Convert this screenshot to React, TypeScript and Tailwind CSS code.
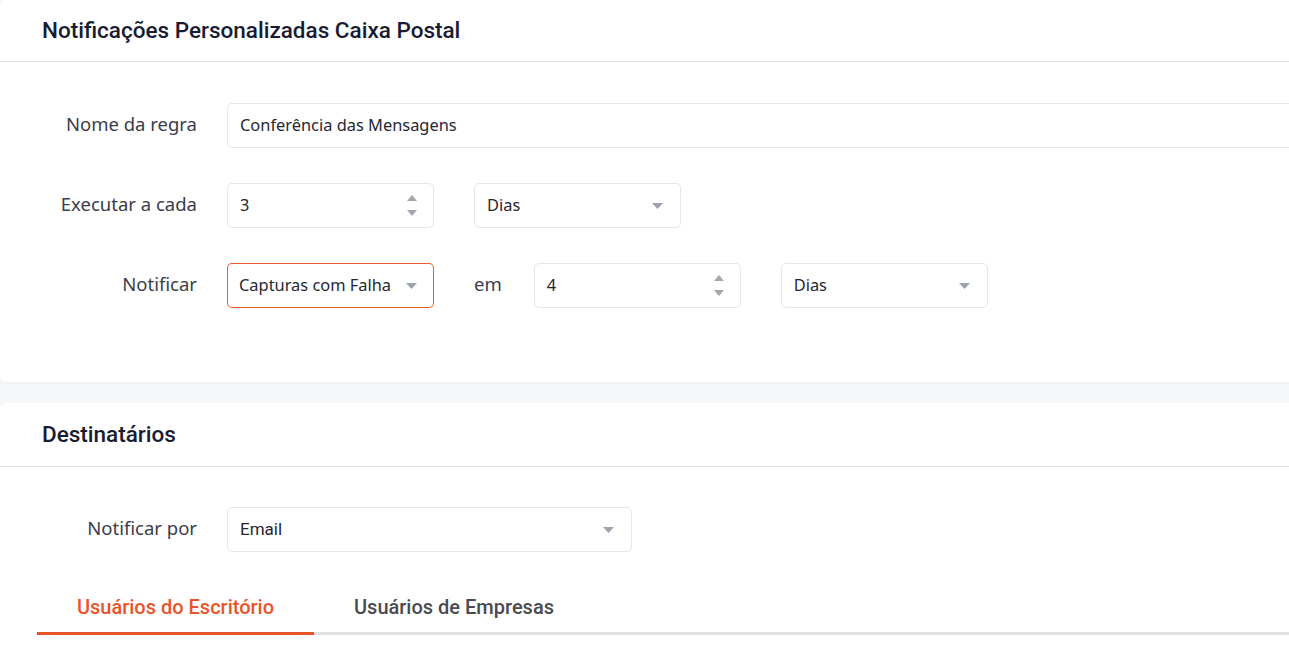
import React from "react";

const Caret = () => (
  <svg width="11" height="6" viewBox="0 0 11 6" className="shrink-0">
    <path d="M0 0 L11 0 L5.5 6 Z" fill="#9ca3af" />
  </svg>
);

const Spinner = () => (
  <div className="flex flex-col items-center gap-[9px] shrink-0">
    <svg width="10" height="6" viewBox="0 0 10 6">
      <path d="M0 6 L10 6 L5 0 Z" fill="#a3a8b0" />
    </svg>
    <svg width="10" height="6" viewBox="0 0 10 6">
      <path d="M0 0 L10 0 L5 6 Z" fill="#a3a8b0" />
    </svg>
  </div>
);

const inputFont = { fontFamily: '"Noto Sans", "Open Sans", sans-serif' };

function NumberInput({ value }: { value: string }) {
  return (
    <div
      className="flex h-[45px] w-[207px] items-center justify-between rounded-[5px] border border-[#e6e6e6] bg-white pl-3 pr-[16px] text-[16.4px] text-[#252733]"
      style={inputFont}
    >
      <span className="pb-[1px]">{value}</span>
      <Spinner />
    </div>
  );
}

function Select({ value }: { value: string }) {
  return (
    <div
      className="flex h-[45px] w-[207px] items-center justify-between rounded-[5px] border border-[#e6e6e6] bg-white pl-3 pr-[17px] text-[16.4px] text-[#252733]"
      style={inputFont}
    >
      <span className="pb-[1px]">{value}</span>
      <Caret />
    </div>
  );
}

function ActiveSelect({ value }: { value: string }) {
  return (
    <div className="rounded-[5px] bg-[#ec5a2c] p-px" style={inputFont}>
      <div className="flex h-[43px] w-[205px] items-center justify-between rounded-[4px] bg-white pl-[11px] pr-[16px] text-[16.4px] text-[#252733]">
        <span className="pb-[1px]">{value}</span>
        <Caret />
      </div>
    </div>
  );
}

function Label({ children }: { children: React.ReactNode }) {
  return (
    <div className="w-[197px] shrink-0 pb-[3px] text-right text-[18.5px] text-[#3a3d4a]" style={inputFont}>
      {children}
    </div>
  );
}

export default function App() {
  return (
    <div className="min-h-[666px] w-[1289px] overflow-hidden bg-[#f6f7f9]" style={{ fontFamily: "Roboto, sans-serif" }}>
      <div className="w-[1320px] rounded-[6px] bg-white shadow-[0_0_6px_rgba(0,0,0,0.04)]">
        <div className="flex h-[62px] items-center border-b border-[#e4e4e4] px-[42px]">
          <h1 className="text-[22.5px] font-medium text-[#181c32]" style={{ fontFamily: "Roboto, sans-serif" }}>
            Notificações Personalizadas Caixa Postal
          </h1>
        </div>
        <div className="flex flex-col gap-[35px] pt-[41px] pb-[74px]">
          <div className="flex items-center gap-[30px]">
            <Label>Nome da regra</Label>
            <div
              className="flex h-[45px] flex-1 items-center rounded-[5px] border border-[#e6e6e6] bg-white pl-3 pb-[1px] text-[16.4px] text-[#252733]"
              style={inputFont}
            >
              Conferência das Mensagens
            </div>
          </div>
          <div className="flex items-center gap-[30px]">
            <Label>Executar a cada</Label>
            <div className="flex items-center gap-[40px]">
              <NumberInput value="3" />
              <Select value="Dias" />
            </div>
          </div>
          <div className="flex items-center gap-[30px]">
            <Label>Notificar</Label>
            <div className="flex items-center gap-[40px]">
              <ActiveSelect value="Capturas com Falha" />
              <span className="pb-[3px] text-[18.5px] text-[#3a3d4a]" style={inputFont}>
                em
              </span>
              <div className="-ml-[8px]">
                <NumberInput value="4" />
              </div>
              <Select value="Dias" />
            </div>
          </div>
        </div>
      </div>

      <div className="mt-[21px] w-[1320px] rounded-[6px] bg-white">
        <div className="flex h-[64px] items-center border-b border-[#e4e4e4] px-[42px]">
          <h2 className="text-[22.5px] font-medium text-[#181c32]" style={{ fontFamily: "Roboto, sans-serif" }}>
            Destinatários
          </h2>
        </div>
        <div className="pt-[40px]">
          <div className="flex items-center gap-[30px]">
            <Label>Notificar por</Label>
            <div
              className="flex h-[45px] w-[405px] items-center justify-between rounded-[5px] border border-[#e6e6e6] bg-white pl-3 pr-[17px] text-[17px] text-[#252733]"
              style={{ fontFamily: "Roboto, sans-serif" }}
            >
              <span>Email</span>
              <Caret />
            </div>
          </div>
          <div className="mt-[33px] ml-[37px] flex flex-col" style={{ fontFamily: "Roboto, sans-serif" }}>
            <div className="flex">
              <div className="flex h-[47px] w-[277px] items-center justify-center pb-[4px] text-[20px] font-medium text-[#e8542a]">
                Usuários do Escritório
              </div>
              <div className="flex h-[47px] w-[280px] items-center justify-center pb-[4px] text-[20px] font-medium text-[#4a4a4f]">
                Usuários de Empresas
              </div>
            </div>
            <div className="flex h-[3px] bg-[#e0e0e0]">
              <div className="h-[3px] w-[277px] bg-[#e8542a]" />
            </div>
          </div>
          <div className="h-[40px]" />
        </div>
      </div>
    </div>
  );
}
